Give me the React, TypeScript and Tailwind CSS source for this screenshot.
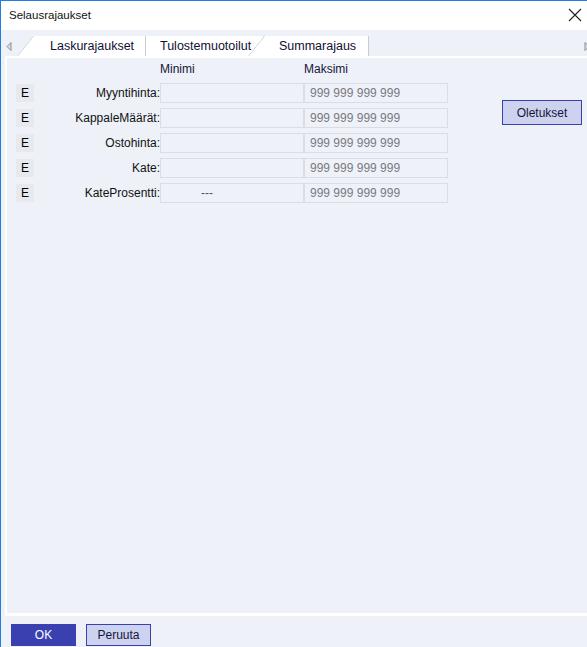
import React from "react";

const rows = [
  { label: "Myyntihinta:", min: "" },
  { label: "KappaleMäärät:", min: "" },
  { label: "Ostohinta:", min: "" },
  { label: "Kate:", min: "" },
  { label: "KateProsentti:", min: "---" },
];

function Slant() {
  return (
    <svg className="absolute left-0 top-0" width="17" height="20" viewBox="0 0 17 20">
      <line x1="0.5" y1="20" x2="16.5" y2="0" stroke="#c9ccd6" strokeWidth="1" />
    </svg>
  );
}

export default function App() {
  return (
    <div className="w-[587px] h-[647px] flex flex-col bg-[#eef1f8] border-l border-t border-[#1f7fe0] font-['Liberation_Sans',Arial,sans-serif] text-[12px] overflow-hidden">
      {/* title bar */}
      <div className="h-[29px] shrink-0 bg-white flex items-center justify-between pl-[8px] pr-[5px]">
        <span className="text-[11.5px] text-[#111111]">Selausrajaukset</span>
        <svg width="14" height="14" viewBox="0 0 14 14" className="mb-[1px]">
          <path d="M1 1 L13 13 M13 1 L1 13" stroke="#222222" strokeWidth="1.1" fill="none" />
        </svg>
      </div>

      {/* tab strip */}
      <div className="relative h-[26px] shrink-0 flex items-end text-[12.5px] text-[#101035]">
        <svg className="absolute left-[5px] top-[12px]" width="6" height="9" viewBox="0 0 6 9">
          <path d="M5 0.5 L1 4.5 L5 8.5 Z" fill="#dcdde3" stroke="#8d8f98" strokeWidth="1" />
        </svg>
        <div className="relative ml-[16px] w-[129px] h-[20px] bg-white border-r border-[#c9ccd6] [clip-path:polygon(16px_0,100%_0,100%_100%,0_100%)] flex items-center pl-[33px]">
          <Slant />
          Laskurajaukset
        </div>
        <div className="relative w-[118px] h-[20px] bg-white border-r border-[#c9ccd6] flex items-center pl-[14px]">
          Tulostemuotoilut
        </div>
        <div className="relative ml-[-16px] w-[121px] h-[20px] bg-white border-r border-[#c9ccd6] [clip-path:polygon(16px_0,100%_0,100%_100%,0_100%)] flex items-center pl-[31px]">
          <Slant />
          Summarajaus
        </div>
        <svg className="absolute right-[-3px] top-[12px]" width="6" height="9" viewBox="0 0 6 9">
          <path d="M1 0.5 L5 4.5 L1 8.5 Z" fill="#dcdde3" stroke="#8d8f98" strokeWidth="1" />
        </svg>
      </div>

      {/* tab page */}
      <div className="flex-1 ml-[4px] border-l-2 border-t-2 border-b-[3px] border-white flex items-start pl-[9px] pt-[2px]">
        <div className="flex flex-col">
          <div className="grid grid-cols-[18px_126px_144px_144px] h-[16px] items-center mb-[7px] text-[#15153a]">
            <span />
            <span />
            <span>Minimi</span>
            <span>Maksimi</span>
          </div>
          <div className="flex flex-col gap-[5px]">
            {rows.map((r) => (
              <div key={r.label} className="grid grid-cols-[18px_126px_144px_144px] h-[20px] items-center">
                <span className="w-[18px] h-[18px] bg-[#e8e9ee] text-black flex items-center justify-center">E</span>
                <span className="text-right text-[#111111]">{r.label}</span>
                <span className="h-[20px] border border-[#d9dde8] flex items-center pl-[40px] text-[#555560]">
                  {r.min}
                </span>
                <span className="h-[20px] border border-[#d9dde8] flex items-center pl-[5px] text-[#7a7a82]">
                  999 999 999 999
                </span>
              </div>
            ))}
          </div>
        </div>
        <button className="ml-[54px] mt-[40px] w-[80px] h-[25px] bg-[#cdd3ef] border border-[#3a40ad] text-[#15153a] flex items-center justify-center">
          Oletukset
        </button>
      </div>

      {/* dialog buttons */}
      <div className="h-[31px] shrink-0 flex items-start gap-[10px] pl-[10px] pt-[8px]">
        <button className="w-[65px] h-[22px] bg-[#3a40b0] text-white flex items-center justify-center">OK</button>
        <button className="w-[65px] h-[22px] bg-[#cdd3ef] border border-[#3a40ad] text-[#15153a] flex items-center justify-center">
          Peruuta
        </button>
      </div>
    </div>
  );
}
